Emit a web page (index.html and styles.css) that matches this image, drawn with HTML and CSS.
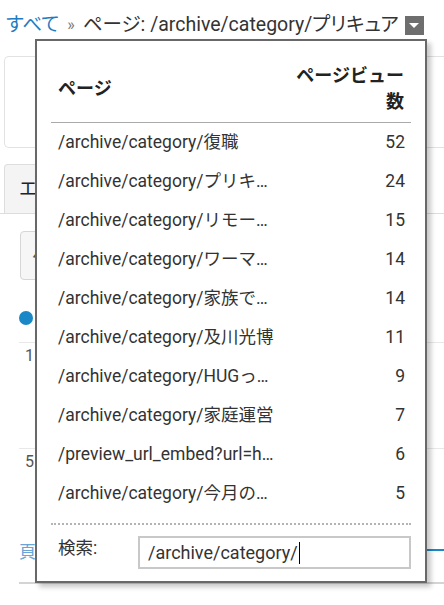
FILE: index.html
```html
<!DOCTYPE html>
<html lang="ja">
<head>
    <meta charset="UTF-8">
    <meta name="viewport" content="width=device-width, initial-scale=1.0">
    <title>ページ: /archive/category/プリキュア</title>
    <link rel="stylesheet" href="styles.css">
</head>
<body>
    <nav class="crumbs">
        <a href="#" class="crumb-link">すべて</a>
        <span class="crumb-sep">»</span>
        <span class="crumb-current">ページ: /archive/category/プリキュア</span>
        <button class="drop-btn" aria-label="開く"><span class="drop-arrow"></span></button>
    </nav>

    <div class="card"></div>

    <div class="tabs">
        <div class="tab">エ</div>
    </div>

    <div class="metric-select">ペ</div>

    <div class="legend"><span class="legend-dot"></span></div>

    <div class="chart">
        <div class="grid-row"><span class="axis-label">1</span></div>
        <div class="grid-row short"><span class="axis-label">5</span></div>
        <div class="series-row">
            <span class="series-label">頁</span>
            <span class="series-line"></span>
        </div>
    </div>

    <div class="popup">
        <table class="pages">
            <thead>
                <tr>
                    <th class="page-col">ページ</th>
                    <th class="num-col">ページビュー数</th>
                </tr>
            </thead>
            <tbody>
                <tr><td>/archive/category/復職</td><td class="num">52</td></tr>
                <tr><td>/archive/category/プリキ…</td><td class="num">24</td></tr>
                <tr><td>/archive/category/リモー…</td><td class="num">15</td></tr>
                <tr><td>/archive/category/ワーマ…</td><td class="num">14</td></tr>
                <tr><td>/archive/category/家族で…</td><td class="num">14</td></tr>
                <tr><td>/archive/category/及川光博</td><td class="num">11</td></tr>
                <tr><td>/archive/category/HUGっ…</td><td class="num">9</td></tr>
                <tr><td>/archive/category/家庭運営</td><td class="num">7</td></tr>
                <tr><td>/preview_url_embed?url=h…</td><td class="num">6</td></tr>
                <tr><td>/archive/category/今月の…</td><td class="num">5</td></tr>
            </tbody>
        </table>
        <div class="search">
            <label class="search-label">検索:</label>
            <div class="search-box">/archive/category/<span class="caret"></span></div>
        </div>
    </div>
</body>
</html>
```

FILE: styles.css
```css
body {
    margin: 0;
    font-family: Roboto, "Noto Sans CJK JP", sans-serif;
    color: #333;
    background: #fff;
}
.crumbs {
    display: flex;
    align-items: center;
    padding: 13px 0 3px 6px;
    font-size: 19.5px;
    line-height: 24px;
    white-space: nowrap;
    font-feature-settings: "palt";
}
.crumb-link {
    color: #1d7cc4;
    text-decoration: none;
}
.crumb-sep {
    color: #777;
    font-size: 16px;
    margin: 0 8px 0 8px;
}
.crumb-current {
    color: #333;
}
.drop-btn {
    width: 19px;
    height: 19px;
    margin-left: 6px;
    padding: 0;
    border: none;
    background: #6e6e6e;
    display: flex;
    align-items: center;
    justify-content: center;
}
.drop-arrow {
    width: 0;
    height: 0;
    border-left: 5px solid transparent;
    border-right: 5px solid transparent;
    border-top: 5px solid #fff;
}
.card {
    margin: 16px 0 0 4px;
    height: 90px;
    border: 1px solid #e2e2e2;
    border-right: none;
    border-radius: 5px 0 0 5px;
}
.tabs {
    margin-top: 16px;
    border-bottom: 1px solid #ddd;
}
.tab {
    margin-left: 4px;
    width: 120px;
    height: 48px;
    padding-left: 14px;
    background: #f4f4f4;
    border: 1px solid #ddd;
    border-bottom: none;
    border-radius: 4px 4px 0 0;
    font-size: 18px;
    line-height: 48px;
    color: #222;
}
.metric-select {
    margin: 17px 0 0 20px;
    width: 200px;
    height: 47px;
    padding-left: 11px;
    background: #f6f6f6;
    border: 1px solid #d6d6d6;
    border-radius: 4px;
    font-size: 17px;
    line-height: 47px;
    color: #555;
}
.legend {
    margin: 31px 0 0 19px;
    height: 14px;
}
.legend-dot {
    display: block;
    width: 14px;
    height: 14px;
    border-radius: 50%;
    background: #1a87c6;
}
.chart {
    margin: 17px 0 0 19px;
    border-bottom: 2px solid #d4d4d4;
}
.grid-row {
    height: 105px;
    border-top: 1px solid #e8e8e8;
}
.grid-row.short {
    height: 89px;
}
.axis-label {
    display: block;
    padding: 3px 0 0 6px;
    font-size: 16px;
    line-height: 20px;
    color: #555;
}
.series-row {
    display: flex;
    align-items: center;
    height: 24px;
    margin-bottom: 20px;
}
.series-label {
    font-size: 17px;
    color: #6aa5d6;
}
.series-line {
    flex: 1;
    height: 2px;
    margin-left: 20px;
    background: #1a87c6;
}
.popup {
    position: absolute;
    left: 35px;
    top: 39px;
    width: 392px;
    box-sizing: border-box;
    padding: 14px 14px 12px;
    background: #fff;
    border: 2px solid #686868;
    box-shadow: 4px 4px 5px rgba(0, 0, 0, 0.22);
}
.pages {
    width: 100%;
    border-collapse: collapse;
}
.pages th {
    padding: 7.5px 7px;
    font-size: 18px;
    line-height: 26px;
    font-weight: bold;
    color: #222;
    border-bottom: 1px solid #aaa;
}
.page-col {
    text-align: left;
}
.num-col {
    width: 110px;
    text-align: right;
}
.pages td {
    padding: 7px 6px 7px 7px;
    font-size: 17.5px;
    line-height: 25px;
    color: #333;
    white-space: nowrap;
}
.pages td.num {
    text-align: right;
}
.search {
    display: flex;
    align-items: flex-start;
    margin-top: 10px;
    padding: 11px 0 0 7px;
    border-top: 2px dotted #b4b4b4;
}
.search-label {
    flex: 0 0 80px;
    font-size: 17.5px;
    line-height: 25px;
    color: #333;
}
.search-box {
    flex: 1;
    height: 33px;
    box-sizing: border-box;
    padding: 0 8px;
    border: 2px solid #c8c8c8;
    font-size: 18px;
    line-height: 29px;
    color: #333;
    display: flex;
    align-items: center;
}
.caret {
    width: 1px;
    height: 22px;
    margin-left: 1px;
    background: #000;
}
```
